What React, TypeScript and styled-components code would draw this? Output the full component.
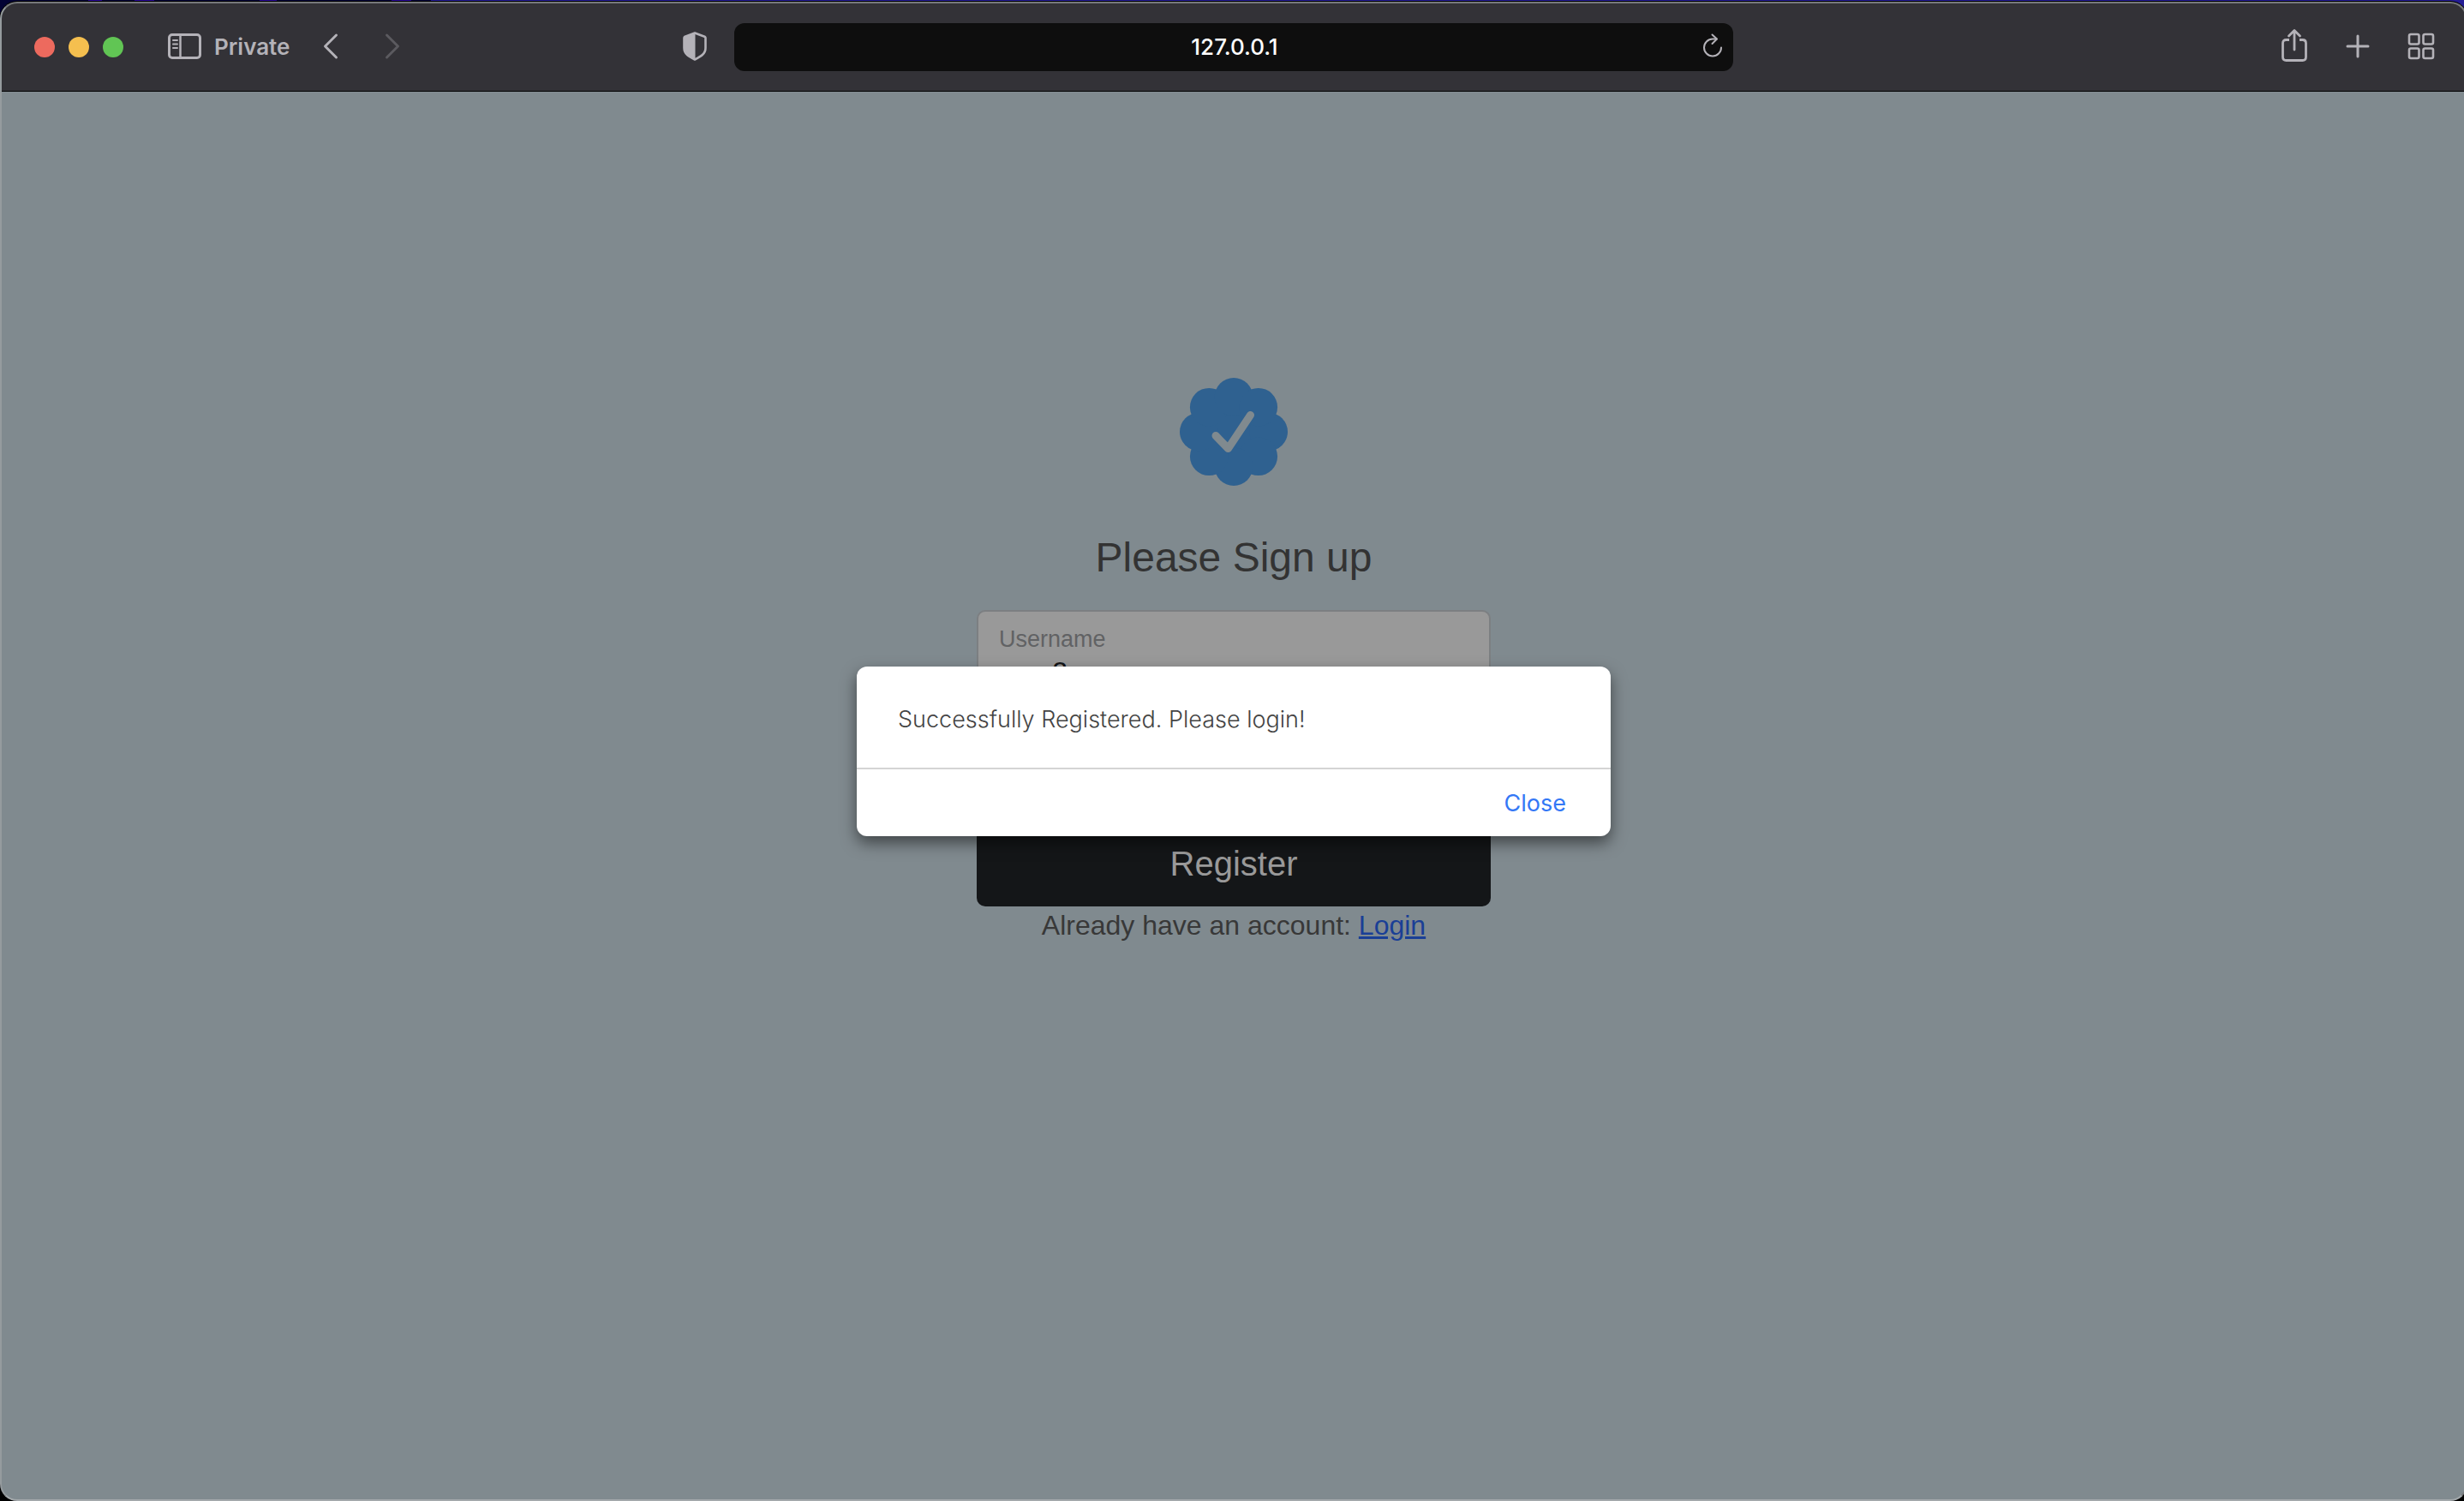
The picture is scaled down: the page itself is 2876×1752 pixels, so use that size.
import React, { useState } from "react";
import styled, { createGlobalStyle } from "styled-components";

const uiFont = `Inter, "Noto Sans", sans-serif`;
const pageFont = `"Liberation Sans", Arial, sans-serif`;

const GlobalStyle = createGlobalStyle`
  *, *::before, *::after { box-sizing: border-box; }
  body { margin: 0; background: #000; }
  button, input { font: inherit; }
`;

const Desktop = styled.div`
  display: flex;
  min-height: 100vh;
  padding-top: 2px;
  overflow: hidden;
  background:
    linear-gradient(90deg,
      #020234 103px, #2a0a96 103px 119px,
      #020234 119px 157px, #2a0a96 157px 180px,
      #020234 180px 303px, #2a0a96 303px 323px,
      #020234 323px 457px, #2a0a96 457px 480px,
      #020234 480px 503px, #241c96 503px) top / 100% 24px no-repeat,
    #000;
`;

const Window = styled.div`
  flex: 0 0 calc(100% + 4px);
  display: flex;
  flex-direction: column;
  border: 2px solid #77797b;
  border-left-color: #959b9e;
  border-bottom-color: #a3a8ab;
  border-radius: 20px;
  box-shadow: 0 0 0 1px #000;
  overflow: hidden;
  background: #808a8f;
`;

const Toolbar = styled.header`
  display: grid;
  grid-template-columns: 1fr minmax(400px, 1166px) 1fr;
  align-items: center;
  height: 103px;
  padding-bottom: 1px;
  background: #333237;
  border-bottom: 1px solid #000;
  color: #b4b2b8;
  font-family: ${uiFont};
`;

const Side = styled.div<{ $end?: boolean }>`
  display: flex;
  align-items: center;
  justify-content: ${(p) => (p.$end ? "flex-end" : "flex-start")};
  padding: ${(p) => (p.$end ? "0 36px 0 0" : "0 30px 0 38px")};
  gap: ${(p) => (p.$end ? "42px" : "0")};
`;

const Lights = styled.div`
  display: flex;
  gap: 16px;
  margin-right: 52px;
`;

const Light = styled.button<{ $color: string }>`
  width: 24px;
  height: 24px;
  padding: 0;
  border: 0;
  border-radius: 50%;
  background: ${(p) => p.$color};
`;

const IconButton = styled.button<{ $faded?: boolean }>`
  display: flex;
  align-items: center;
  justify-content: center;
  min-width: 32px;
  height: 44px;
  padding: 0 0 2px;
  border: 0;
  background: none;
  color: ${(p) => (p.$faded ? "#5b5a5f" : "inherit")};
`;

const Mode = styled.span`
  margin: 0 32px 0 14px;
  font-size: 26px;
  line-height: 32px;
  font-weight: 600;
`;

const History = styled.div`
  display: flex;
  gap: 40px;
  margin-right: auto;
`;

const AddressBar = styled.div`
  display: flex;
  align-items: center;
  height: 56px;
  padding: 0 8px 0 42px;
  border-radius: 12px;
  background: #0e0e0e;
`;

const Address = styled.input`
  flex: 1;
  min-width: 0;
  padding: 0;
  border: 0;
  outline: 0;
  background: none;
  color: #fff;
  font-size: 26px;
  line-height: 32px;
  font-weight: 500;
  text-align: center;
`;

const Page = styled.main`
  position: relative;
  flex: 1;
  display: flex;
  flex-direction: column;
  align-items: center;
  padding-top: 334px;
  color: #333;
  font-family: ${pageFont};
  font-size: 32px;
  line-height: 44px;
`;

const Form = styled.form`
  display: flex;
  flex-direction: column;
  align-items: center;
  width: 600px;
  max-width: 100%;
`;

const Title = styled.h1`
  margin: 55px 0 32px;
  font-size: 48px;
  line-height: 58px;
  font-weight: 400;
`;

const Field = styled.div<{ $last?: boolean }>`
  display: flex;
  flex-direction: column;
  width: 100%;
  height: 116px;
  padding: 16px 24px 0;
  border: 2px solid #7c7f82;
  border-radius: ${(p) => (p.$last ? "0 0 10px 10px" : "10px 10px 0 0")};
  margin-bottom: ${(p) => (p.$last ? "20px" : "-2px")};
  background: #999;
`;

const Label = styled.label`
  color: #616264;
  font-size: 27px;
  line-height: 32px;
`;

const TextBox = styled.input`
  height: 44px;
  padding: 0;
  border: 0;
  outline: 0;
  background: none;
  color: #141618;
  font-size: 32px;
  line-height: 44px;
`;

const Submit = styled.button`
  width: 100%;
  padding: 16px 32px 20px;
  border: 0;
  border-radius: 10px;
  background: #141618;
  color: #999;
  font-size: 40px;
  line-height: 60px;
`;

const Account = styled.p`
  margin: 0;
  color: #383838;
`;

const LoginLink = styled.a`
  color: #1a3f96;
  text-decoration: underline;
`;

const Overlay = styled.div`
  position: absolute;
  inset: 0;
  display: flex;
  align-items: flex-start;
  justify-content: center;
  padding-top: 671px;
`;

const Dialog = styled.div`
  width: 880px;
  max-width: 100%;
  border-radius: 12px;
  background: #fff;
  box-shadow: 0 8px 18px rgba(0, 0, 0, 0.5);
  font-family: ${uiFont};
  font-size: 27px;
`;

const Message = styled.p`
  margin: 0;
  padding: 44px 48px 38px;
  border-bottom: 2px solid #d4d4d4;
  color: #444;
  font-weight: 300;
  line-height: 36px;
`;

const Actions = styled.div`
  display: flex;
  justify-content: flex-end;
  padding: 18px 52px 20px;
`;

const Close = styled.button`
  padding: 4px 0 0;
  border: 0;
  background: none;
  color: #3478f6;
  line-height: 36px;
`;

const SidebarIcon = () => (
  <svg width="40" height="32" viewBox="0 0 40 32" fill="none" stroke="currentColor" strokeWidth="3">
    <rect x="1.5" y="2.5" width="36" height="27" rx="3.5" />
    <path d="M14.5 2.5v27" strokeWidth="2.5" />
    <path d="M6 9h5M6 13.500h5M6 18h5" strokeWidth="2" strokeLinecap="round" />
  </svg>
);

const Chevron = ({ back }: { back?: boolean }) => (
  <svg width="20" height="32" viewBox="0 0 20 32" fill="none" stroke="currentColor" strokeWidth="3" strokeLinecap="round" strokeLinejoin="round">
    <path d={back ? "M16.500 3L3.500 16l13 13" : "M3.500 3l13 13-13 13"} />
  </svg>
);

const ShieldIcon = () => (
  <svg width="30" height="36" viewBox="0 0 30 36">
    <path
      d="M15 2.500L27 7Q27.500 7.300 27.500 8.500V20C27.500 27 22 30 15 33.500 8 30 2.500 27 2.500 20V8.500Q2.500 7.300 3 7Z"
      fill="none"
      stroke="currentColor"
      strokeWidth="2.600"
      strokeLinejoin="round"
    />
    <path d="M15.500 2L3 7 2 20Q3 27 15.500 33.500Z" fill="currentColor" />
  </svg>
);

const ReloadIcon = () => (
  <svg width="26" height="30" viewBox="0 0 26 30" fill="none" stroke="currentColor" strokeWidth="2" strokeLinecap="round" strokeLinejoin="round">
    <path d="M23 16.500A10 10 0 1 1 13 6.500h4.500" />
    <path d="M12.500 1.500l5.500 5-5.500 5.500" />
  </svg>
);

const ShareIcon = () => (
  <svg width="32" height="42" viewBox="0 0 32 42" fill="none" stroke="currentColor" strokeWidth="2.800" strokeLinecap="round" strokeLinejoin="round">
    <path d="M10 13.500H6.500Q2.500 13.500 2.500 17.500V33.500Q2.500 37.500 6.500 37.500H25.500Q29.500 37.500 29.500 33.500V17.500Q29.500 13.500 25.500 13.500H22" strokeLinecap="butt" />
    <path d="M16 25V3M9.500 9L16 2.500 22.500 9" />
  </svg>
);

const PlusIcon = () => (
  <svg width="28" height="28" viewBox="0 0 28 28" stroke="currentColor" strokeWidth="3" strokeLinecap="round">
    <path d="M14 2v24M2 14h24" />
  </svg>
);

const TabsIcon = () => (
  <svg width="32" height="32" viewBox="0 0 32 32" fill="none" stroke="currentColor" strokeWidth="2.600">
    <rect x="2" y="2" width="11.500" height="11.500" rx="2" />
    <rect x="18.500" y="2" width="11.500" height="11.500" rx="2" />
    <rect x="2" y="18.500" width="11.500" height="11.500" rx="2" />
    <rect x="18.500" y="18.500" width="11.500" height="11.500" rx="2" />
  </svg>
);

const petals = Array.from({ length: 8 }, (_, i) => (i * Math.PI) / 4);

const VerifiedBadge = () => (
  <svg width="126" height="126" viewBox="0 0 126 126" aria-hidden="true">
    <g fill="#2f6190">
      <circle cx="63" cy="63" r="42" />
      {petals.map((a) => (
        <circle key={a} cx={63 + 40.7 * Math.cos(a)} cy={63 + 40.7 * Math.sin(a)} r="22.3" />
      ))}
    </g>
    <path d="M42 67.500L56.500 82.500 82.500 43.500" fill="none" stroke="#808a8f" strokeWidth="9" strokeLinecap="round" strokeLinejoin="round" />
  </svg>
);

export default function App() {
  const [open, setOpen] = useState(true);
  return (
    <>
      <GlobalStyle />
      <Desktop>
        <Window>
          <Toolbar>
            <Side>
              <Lights>
                <Light $color="#ed6a5e" aria-label="Close window" />
                <Light $color="#f5bf4f" aria-label="Minimise" />
                <Light $color="#61c554" aria-label="Zoom" />
              </Lights>
              <IconButton aria-label="Sidebar"><SidebarIcon /></IconButton>
              <Mode>Private</Mode>
              <History>
                <IconButton aria-label="Back"><Chevron back /></IconButton>
                <IconButton $faded aria-label="Forward"><Chevron /></IconButton>
              </History>
              <IconButton aria-label="Privacy report"><ShieldIcon /></IconButton>
            </Side>
            <AddressBar>
              <Address aria-label="Address" defaultValue="127.0.0.1" />
              <IconButton aria-label="Reload"><ReloadIcon /></IconButton>
            </AddressBar>
            <Side $end>
              <IconButton aria-label="Share"><ShareIcon /></IconButton>
              <IconButton aria-label="New tab"><PlusIcon /></IconButton>
              <IconButton aria-label="Tab overview"><TabsIcon /></IconButton>
            </Side>
          </Toolbar>
          <Page>
            <Form onSubmit={(e) => { e.preventDefault(); setOpen(true); }}>
              <VerifiedBadge />
              <Title>Please Sign up</Title>
              <Field>
                <Label htmlFor="username">Username</Label>
                <TextBox id="username" defaultValue="user2" />
              </Field>
              <Field $last>
                <TextBox type="password" aria-label="Password" />
              </Field>
              <Submit type="submit">Register</Submit>
            </Form>
            <Account>
              Already have an account: <LoginLink href="#login">Login</LoginLink>
            </Account>
            {open && (
              <Overlay>
                <Dialog role="dialog" aria-modal="true" aria-labelledby="notice">
                  <Message id="notice">Successfully Registered. Please login!</Message>
                  <Actions>
                    <Close type="button" onClick={() => setOpen(false)}>Close</Close>
                  </Actions>
                </Dialog>
              </Overlay>
            )}
          </Page>
        </Window>
      </Desktop>
    </>
  );
}
